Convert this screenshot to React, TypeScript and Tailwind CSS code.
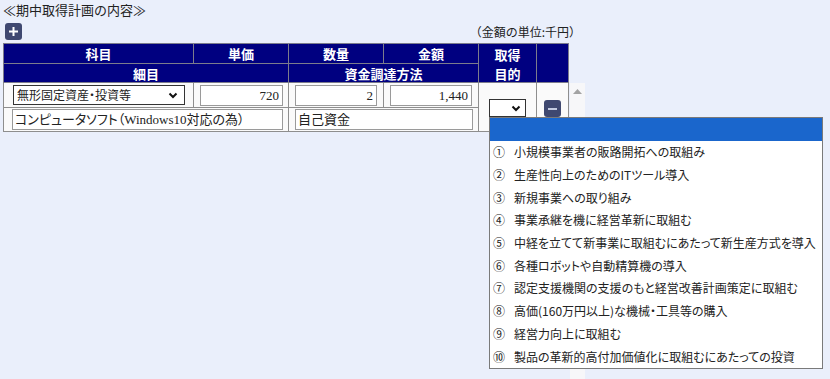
import React from "react";

const PURPOSES = [
  "小規模事業者の販路開拓への取組み",
  "生産性向上のためのITツール導入",
  "新規事業への取り組み",
  "事業承継を機に経営革新に取組む",
  "中経を立てて新事業に取組むにあたって新生産方式を導入",
  "各種ロボットや自動精算機の導入",
  "認定支援機関の支援のもと経営改善計画策定に取組む",
  "高価(160万円以上)な機械・工具等の購入",
  "経営力向上に取組む",
  "製品の革新的高付加価値化に取組むにあたっての投資",
];

const MARKS = ["①", "②", "③", "④", "⑤", "⑥", "⑦", "⑧", "⑨", "⑩"];

function Chevron() {
  return (
    <svg width="10" height="7" viewBox="0 0 10 7" className="shrink-0">
      <path d="M1.5 1.5 L5 5 L8.5 1.5" fill="none" stroke="#111" strokeWidth="2" />
    </svg>
  );
}

function TextBox({ value, right, className }: { value: string; right?: boolean; className: string }) {
  return (
    <div
      className={`h-[21px] border border-[#9a9a9a] bg-white text-[13px] leading-[19px] font-['Liberation_Serif','Noto_Sans_CJK_JP',serif] [font-feature-settings:'palt'] text-[#222] whitespace-nowrap overflow-hidden ${
        right ? "text-right pr-[3px]" : "pl-[2px]"
      } ${className}`}
    >
      {value}
    </div>
  );
}

function HeadCell({ children, className = "" }: { children?: React.ReactNode; className?: string }) {
  return (
    <div className={`bg-[#000080] text-white font-bold text-[13px] flex items-center justify-center leading-[17px] text-center ${className}`}>
      {children}
    </div>
  );
}

export default function App() {
  return (
    <div className="relative w-[830px] h-[379px] overflow-hidden bg-[#eaeffb] text-[#222] font-['Noto_Sans_CJK_JP',sans-serif]">
      <div className="pl-[3px]">
        <div className="h-[20px] text-[13px] leading-[20px]">≪期中取得計画の内容≫</div>

        <div className="flex items-center justify-between w-[578px] h-[23px]">
          <button className="w-[17px] h-[17px] ml-[2px] rounded-[3px] bg-[#3f4870] flex items-center justify-center">
            <svg width="11" height="11" viewBox="0 0 11 11">
              <path d="M5.5 1 V10 M1 5.5 H10" stroke="#fff" strokeWidth="2" />
            </svg>
          </button>
          <span className="text-[12px] leading-[18px]">（金額の単位:千円）</span>
        </div>

        {/* header */}
        <div className="w-[566px] grid grid-cols-[189px_94px_94px_94px_57px_31px] grid-rows-[19px_18px] gap-px p-px bg-[#7c7c8c]">
          <HeadCell>科目</HeadCell>
          <HeadCell>単価</HeadCell>
          <HeadCell>数量</HeadCell>
          <HeadCell>金額</HeadCell>
          <HeadCell className="row-span-2 leading-[19px] pt-[1px]">
            取得
            <br />
            目的
          </HeadCell>
          <HeadCell className="row-span-2" />
          <HeadCell className="col-span-2">細目</HeadCell>
          <HeadCell className="col-span-2">資金調達方法</HeadCell>
        </div>

        {/* rows */}
        <div className="flex h-[300px]">
          <div className="w-[566px]">
            <div className="grid grid-cols-[189px_94px_94px_94px_57px_31px] grid-rows-[24px_23px] gap-px px-px pb-px bg-[#8e8e8e]">
              <div className="bg-[#fafafa] flex items-center pl-[9px]">
                <div className="w-[172px] h-[20px] border border-[#333] bg-white flex items-center justify-between pl-[3px] pr-[6px] text-[12px] [font-feature-settings:'palt']">
                  <span>無形固定資産・投資等</span>
                  <Chevron />
                </div>
              </div>
              <div className="bg-[#fafafa] flex items-center pl-[6px]">
                <TextBox value="720" right className="w-[83px]" />
              </div>
              <div className="bg-[#fafafa] flex items-center pl-[6px]">
                <TextBox value="2" right className="w-[82px]" />
              </div>
              <div className="bg-[#fafafa] flex items-center pl-[6px]">
                <TextBox value="1,440" right className="w-[82px]" />
              </div>
              <div className="row-span-2 bg-[#fafafa] flex items-center pl-[10px] pt-[2px]">
                <div className="w-[37px] h-[18px] border border-[#333] bg-white flex items-center justify-end pr-[4px]">
                  <Chevron />
                </div>
              </div>
              <div className="row-span-2 bg-[#fafafa] flex items-center pl-[7px] pt-[3px]">
                <button className="w-[17px] h-[17px] rounded-[3px] bg-[#3f4870] flex items-center justify-center">
                  <span className="block w-[9px] h-[2px] bg-[#c3cae0]" />
                </button>
              </div>
              <div className="col-span-2 bg-[#fafafa] flex items-center pl-[8px]">
                <TextBox value="コンピュータソフト（Windows10対応の為）" className="w-[271px]" />
              </div>
              <div className="col-span-2 bg-[#fafafa] flex items-center pl-[6px]">
                <TextBox value="自己資金" className="w-[178px]" />
              </div>
            </div>
          </div>

          <div className="ml-[1px] w-[15px] h-full bg-[#f7f7f9] flex justify-center pt-[6px]">
            <svg width="9" height="5" viewBox="0 0 9 5">
              <path d="M0 5 L4.5 0 L9 5 Z" fill="#a3a3a3" />
            </svg>
          </div>
        </div>
      </div>

      {/* open dropdown list */}
      <div className="absolute left-[489px] top-[117px] w-[334px] border border-[#7a7a7a] bg-white text-[12px] text-[#222] [font-feature-settings:'palt']">
        <div className="h-[23px] bg-[#1a66cc]" />
        {PURPOSES.map((p, i) => (
          <div key={i} className="h-[22.7px] flex items-center pl-[3px] whitespace-nowrap">
            <span className="w-[21px] shrink-0">{MARKS[i]}</span>
            <span>{p}</span>
          </div>
        ))}
      </div>
    </div>
  );
}
